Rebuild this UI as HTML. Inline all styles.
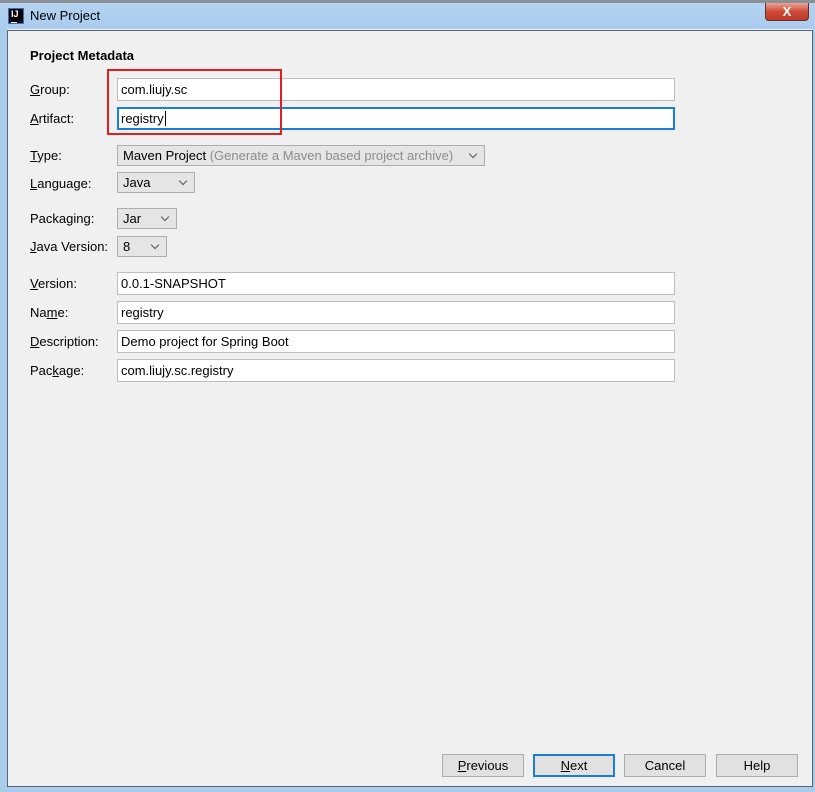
<!DOCTYPE html>
<html><head><style>
*{margin:0;padding:0;box-sizing:border-box}
body{width:815px;height:792px;overflow:hidden;background:#a9cbec;font-family:"Liberation Sans",sans-serif;font-size:13px;color:#000;position:relative}
.top{position:absolute;left:0;top:0;width:815px;height:3px;background:#8a8f96}
.tb{position:absolute;left:0;top:3px;width:815px;height:28px;background:linear-gradient(#b4d3f1,#a9cbee)}
.panel{position:absolute;left:7px;top:30px;width:806px;height:757px;background:#f0f0f0;border:1px solid #5a6470;box-shadow:0 -1px 0 #e8f2fc}
.a{position:absolute}
.lbl{position:absolute;left:30px}
.in{position:absolute;left:117px;width:558px;height:23px;background:#fff;border:1px solid #bdbdbd;padding:3px 0 0 3px}
.cb{position:absolute;left:117px;height:21px;background:#e5e5e5;border:1px solid #adadad;padding:2px 0 0 5px}
.cb:after{content:"";position:absolute;right:8px;top:5px;width:5px;height:5px;border-right:1px solid #555;border-bottom:1px solid #555;transform:rotate(45deg)}
.btn{position:absolute;top:754px;width:82px;height:23px;background:#e1e1e1;border:1px solid #adadad;text-align:center;padding-top:3px}
u{text-decoration:underline}
</style></head><body>
<div class="top"></div>
<div class="tb"></div>
<div class="a" style="left:8px;top:8px;width:16px;height:16px;background:#000;border:1px solid #3a6cc4;color:#fff;font-size:9px;font-weight:bold;padding:1px 0 0 2px;line-height:9px">IJ<div style="width:6px;height:1px;background:#fff;margin-top:3px"></div></div>
<div class="a" style="left:30px;top:8px;font-size:13px">New Project</div>
<div class="a" style="left:765px;top:3px;width:44px;height:18px;border:1px solid #6b2a22;border-top:none;border-radius:0 0 4px 4px;background:linear-gradient(#e8a598,#cf4a36 50%,#c0392b);color:#fff;font-weight:bold;text-align:center;font-size:13px;line-height:17px">X</div>
<div class="panel"></div>
<div class="a" style="left:30px;top:48px;font-weight:bold">Project Metadata</div>
<div class="lbl" style="top:82px"><u>G</u>roup:</div>
<div class="in" style="top:78px">com.liujy.sc</div>
<div class="lbl" style="top:111px"><u>A</u>rtifact:</div>
<div class="in" style="top:107px;border:2px solid #1a7fd4;padding:2px 0 0 2px">registry<span style="border-left:1px solid #000;margin-left:1px"></span></div>
<div class="a" style="left:107px;top:69px;width:175px;height:66px;border:2px solid #e02020"></div>
<div class="lbl" style="top:148px"><u>T</u>ype:</div>
<div class="cb" style="top:145px;width:368px">Maven Project <span style="color:#8c8c8c">(Generate a Maven based project archive)</span></div>
<div class="lbl" style="top:176px"><u>L</u>anguage:</div>
<div class="cb" style="top:172px;width:78px">Java</div>
<div class="lbl" style="top:211px">Packa<u>g</u>ing:</div>
<div class="cb" style="top:208px;width:60px">Jar</div>
<div class="lbl" style="top:239px"><u>J</u>ava Version:</div>
<div class="cb" style="top:236px;width:50px">8</div>
<div class="lbl" style="top:276px"><u>V</u>ersion:</div>
<div class="in" style="top:272px">0.0.1-SNAPSHOT</div>
<div class="lbl" style="top:305px">Na<u>m</u>e:</div>
<div class="in" style="top:301px">registry</div>
<div class="lbl" style="top:334px"><u>D</u>escription:</div>
<div class="in" style="top:330px">Demo project for Spring Boot</div>
<div class="lbl" style="top:363px">Pac<u>k</u>age:</div>
<div class="in" style="top:359px">com.liujy.sc.registry</div>
<div class="btn" style="left:442px"><u>P</u>revious</div>
<div class="btn" style="left:533px;border:2px solid #1a7fd4;padding-top:2px"><u>N</u>ext</div>
<div class="btn" style="left:624px">Cancel</div>
<div class="btn" style="left:716px">Help</div>
</body></html>
